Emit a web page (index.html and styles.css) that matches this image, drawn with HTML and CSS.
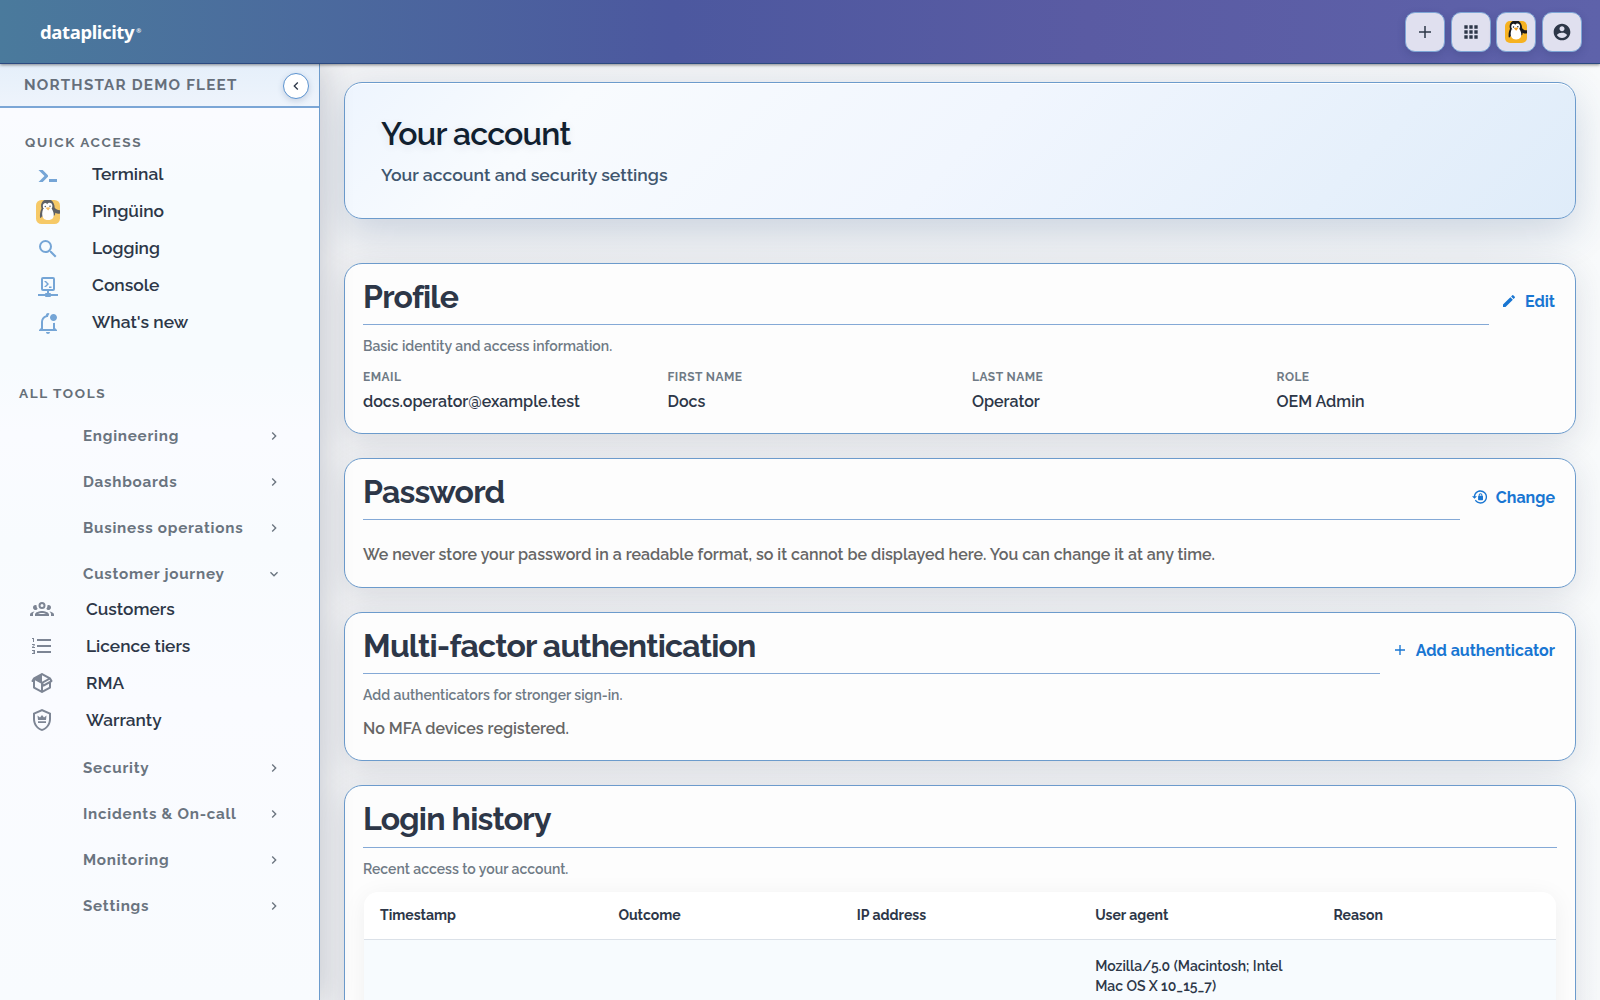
FILE: index.html
```
<!DOCTYPE html>
<html lang="en">
<head>
    <meta charset="UTF-8">
    <meta name="viewport" content="width=device-width, initial-scale=1.0">
    <title>Your account</title>
    <link rel="stylesheet" href="styles.css">
</head>
<body>
    <!-- Shared shapes -->
    <svg class="defs" aria-hidden="true">
        <symbol id="penguin" viewBox="0 0 24 24">
            <rect width="24" height="24" rx="5.5" fill="#f6b221"/>
            <path d="M7 1C5 3 4.600 6 5.500 8.500C4.300 11 3.700 14 4 17.500C4.300 18.600 5.300 17.500 5.800 16.500L18.500 15.500C19.300 14.500 19.300 13.500 19.200 12.800C21 13.800 23 14 24 13.400V10.200C22 10.300 20 9.500 18.700 7.800C18.600 4.500 17.500 2 15 0H8.500z" fill="#17181c"/>
            <path d="M7.200 9C6 12 5.600 15.500 7.300 18C8.700 20.600 15 21 17 18C18.600 15.500 17.500 11 15.500 8.500z" fill="#fff"/>
            <path d="M11.200 4.200C10 2.300 7.200 2.700 6.800 5.800C6.700 8.500 8.500 10.500 11.500 10.500C14.800 10.500 16.900 8 16.300 5C15.700 2.300 12.600 1.900 11.200 4.200z" fill="#fff"/>
            <circle cx="9.300" cy="6.500" r=".8" fill="#17181c"/>
            <circle cx="14" cy="6.200" r=".8" fill="#17181c"/>
            <path d="M9.600 8C11 7 13 7 14.400 7.800L12.200 10.600z" fill="#f59f1c"/>
        </symbol>
        <symbol id="chevron" viewBox="0 0 24 24">
            <path d="M10 6 8.590 7.410 13.170 12l-4.580 4.590L10 18l6-6z"/>
        </symbol>
    </svg>

    <header class="topbar">
        <a class="logo">dataplicity<sup>®</sup></a>
        <div class="topbar-actions">
            <button class="icon-btn"><svg viewBox="0 0 24 24"><path d="M20 13h-7v7h-2v-7H4v-2h7V4h2v7h7z"/></svg></button>
            <button class="icon-btn"><svg viewBox="0 0 24 24"><path d="M4 8h4V4H4v4zm6 12h4v-4h-4v4zm-6 0h4v-4H4v4zm0-6h4v-4H4v4zm6 0h4v-4h-4v4zm6-10v4h4V4h-4zm-6 4h4V4h-4v4zm6 6h4v-4h-4v4zm0 6h4v-4h-4v4z"/></svg></button>
            <button class="icon-btn"><svg class="big" viewBox="0 0 24 24"><use href="#penguin"/></svg></button>
            <button class="icon-btn"><svg viewBox="0 0 24 24"><path d="M12 2C6.480 2 2 6.480 2 12s4.480 10 10 10 10-4.480 10-10S17.520 2 12 2zm0 3c1.660 0 3 1.340 3 3s-1.340 3-3 3-3-1.340-3-3 1.340-3 3-3zm0 14.200c-2.500 0-4.710-1.280-6-3.220.03-1.990 4-3.080 6-3.080 1.990 0 5.970 1.090 6 3.080-1.290 1.940-3.500 3.220-6 3.220z"/></svg></button>
        </div>
    </header>

    <div class="layout">
        <aside class="sidebar">
            <div class="org">
                <span>NORTHSTAR DEMO FLEET</span>
                <button class="collapse"><svg viewBox="0 0 24 24"><path d="M15.410 7.410 14 6l-6 6 6 6 1.410-1.410L10.830 12z"/></svg></button>
            </div>

            <h4 class="section-label">QUICK ACCESS</h4>
            <ul class="quick">
                <li><svg viewBox="0 0 24 24"><path d="M13 19V16H21V19H13M8.500 13L2.470 7H6.710L11.670 11.950C12.250 12.540 12.250 13.500 11.670 14.070L6.740 19H2.500L8.500 13Z"/></svg>Terminal</li>
                <li><svg viewBox="0 0 24 24"><use href="#penguin"/></svg>Pingüino</li>
                <li><svg viewBox="0 0 24 24"><path d="M15.500 14h-.79l-.28-.27A6.471 6.471 0 0 0 16 9.500 6.500 6.500 0 1 0 9.500 16c1.610 0 3.090-.59 4.230-1.570l.27.28v.79l5 4.990L20.490 19l-4.990-5zm-6 0C7.010 14 5 11.990 5 9.500S7.010 5 9.500 5 14 7.010 14 9.500 11.990 14 9.500 14z"/></svg>Logging</li>
                <li><svg viewBox="0 0 24 24"><path d="M15 20A1 1 0 0 0 14 19H13V17H17A2 2 0 0 0 19 15V5A2 2 0 0 0 17 3H7A2 2 0 0 0 5 5V15A2 2 0 0 0 7 17H11V19H10A1 1 0 0 0 9 20H2V22H9A1 1 0 0 0 10 23H14A1 1 0 0 0 15 22H22V20H15M7 15V5H17V15H7M8 7H10L13 10L10 13H8L11 10zM13 12.500H15.500V14H13z"/></svg>Console</li>
                <li><svg viewBox="0 0 24 24"><path d="M19 17V11.800C18.500 11.900 18 12 17.500 12H17V18H7V11C7 8.200 9.200 6 12 6C12.100 4.700 12.700 3.600 13.500 2.700C13.200 2.300 12.600 2 12 2C10.900 2 10 2.900 10 4V4.300C7 5.200 5 7.900 5 11V17L3 19V20H21V19L19 17M10 21C10 22.100 10.900 23 12 23S14 22.100 14 21H10M21 6.500C21 8.400 19.400 10 17.500 10S14 8.400 14 6.500 15.600 3 17.500 3 21 4.600 21 6.500"/></svg>What's new</li>
            </ul>

            <h4 class="section-label tools-label">ALL TOOLS</h4>
            <nav class="tools">
                <div class="group">Engineering<svg><use href="#chevron"/></svg></div>
                <div class="group">Dashboards<svg><use href="#chevron"/></svg></div>
                <div class="group">Business operations<svg><use href="#chevron"/></svg></div>
                <div class="group open">Customer journey<svg><use href="#chevron"/></svg></div>
                <ul class="children">
                    <li><svg viewBox="0 0 24 24"><path d="M12,5A3.500,3.500 0 0,0 8.500,8.500A3.500,3.500 0 0,0 12,12A3.500,3.500 0 0,0 15.500,8.500A3.500,3.500 0 0,0 12,5M12,7A1.500,1.500 0 0,1 13.500,8.500A1.500,1.500 0 0,1 12,10A1.500,1.500 0 0,1 10.500,8.500A1.500,1.500 0 0,1 12,7M5.500,8A2.500,2.500 0 0,0 3,10.500C3,11.440 3.530,12.250 4.290,12.680C4.650,12.880 5.060,13 5.500,13C5.940,13 6.350,12.880 6.710,12.680C7.080,12.470 7.390,12.170 7.620,11.810C6.890,10.860 6.500,9.700 6.500,8.500C6.500,8.410 6.500,8.310 6.500,8.220C6.200,8.080 5.860,8 5.500,8M18.500,8C18.140,8 17.800,8.080 17.500,8.220C17.500,8.310 17.500,8.410 17.500,8.500C17.500,9.700 17.110,10.860 16.380,11.810C16.500,12 16.630,12.150 16.780,12.300C16.940,12.450 17.100,12.580 17.290,12.680C17.650,12.880 18.060,13 18.500,13C18.940,13 19.350,12.880 19.710,12.680C20.470,12.250 21,11.440 21,10.500A2.500,2.500 0 0,0 18.500,8M12,14C9.660,14 5,15.170 5,17.500V19H19V17.500C19,15.170 14.340,14 12,14M4.710,14.550C2.780,14.780 0,15.760 0,17.500V19H3V17.070C3,16.060 3.690,15.220 4.710,14.550M19.290,14.550C20.310,15.220 21,16.060 21,17.070V19H24V17.500C24,15.760 21.220,14.780 19.290,14.550M12,16C13.530,16 15.240,16.500 16.230,17H7.770C8.760,16.500 10.470,16 12,16Z"/></svg>Customers</li>
                    <li><svg viewBox="0 0 24 24"><path d="M7,13V11H21V13H7M7,19V17H21V19H7M7,7V5H21V7H7M3,8V5H2V4H4V8H3M2,17V16H5V20H2V19H4V18.500H3V17.500H4V17H2M4.250,10A0.750,0.750 0 0,1 5,10.750C5,10.950 4.920,11.140 4.790,11.270L3.120,13H5V14H2V13.080L4,11H2V10H4.250Z"/></svg>Licence tiers</li>
                    <li><svg viewBox="0 0 24 24"><path d="M2,10.960C1.500,10.680 1.350,10.070 1.630,9.590L3.130,7C3.240,6.800 3.410,6.660 3.600,6.580L11.430,2.180C11.590,2.060 11.790,2 12,2C12.210,2 12.410,2.060 12.570,2.180L20.470,6.620C20.660,6.720 20.820,6.880 20.910,7.080L22.360,9.600C22.640,10.080 22.470,10.690 22,10.960L21,11.540V16.500C21,16.880 20.790,17.210 20.470,17.380L12.570,21.820C12.410,21.940 12.210,22 12,22C11.790,22 11.590,21.940 11.430,21.820L3.530,17.380C3.210,17.210 3,16.880 3,16.500V10.960C2.700,11.130 2.320,11.140 2,10.960M12,4.150L12,10.850L17.960,7.500L12,4.150M5,15.910L11,19.290V12.580L5,9.210V15.910M19,15.910V12.690L14,15.590C13.670,15.770 13.300,15.760 13,15.600V19.290L19,15.910M13.850,13.360L20.130,9.730L19.550,8.720L13.270,12.350L13.850,13.360Z"/></svg>RMA</li>
                    <li><svg viewBox="0 0 24 24"><path d="M21,11C21,16.550 17.160,21.740 12,23C6.840,21.740 3,16.550 3,11V5L12,1L21,5V11M12,21C15.750,20 19,15.540 19,11.220V6.300L12,3.180L5,6.300V11.220C5,15.540 8.250,20 12,21M16.500,7.500L14,9.500L12,7L10,9.500L7.500,7.500L8,12H16L16.500,7.500M16,13.200H8V15H16V13.200Z"/></svg>Warranty</li>
                </ul>
                <div class="group">Security<svg><use href="#chevron"/></svg></div>
                <div class="group">Incidents &amp; On-call<svg><use href="#chevron"/></svg></div>
                <div class="group">Monitoring<svg><use href="#chevron"/></svg></div>
                <div class="group">Settings<svg><use href="#chevron"/></svg></div>
            </nav>
        </aside>

        <main class="content">
            <section class="hero">
                <h1>Your account</h1>
                <p>Your account and security settings</p>
            </section>

            <section class="card profile">
                <div class="card-head">
                    <h2>Profile</h2>
                    <a class="action"><svg viewBox="0 0 24 24"><path d="M3 17.250V21h3.750L17.810 9.940l-3.750-3.750L3 17.250zM20.710 7.040c.39-.39.39-1.020 0-1.410l-2.340-2.340a.996.996 0 0 0-1.410 0l-1.830 1.830 3.750 3.750 1.830-1.830z"/></svg>Edit</a>
                </div>
                <p class="hint">Basic identity and access information.</p>
                <dl class="fields">
                    <div><dt>EMAIL</dt><dd>docs.operator@example.test</dd></div>
                    <div><dt>FIRST NAME</dt><dd>Docs</dd></div>
                    <div><dt>LAST NAME</dt><dd>Operator</dd></div>
                    <div><dt>ROLE</dt><dd>OEM Admin</dd></div>
                </dl>
            </section>

            <section class="card password">
                <div class="card-head">
                    <h2>Password</h2>
                    <a class="action"><svg viewBox="0 0 24 24"><path d="M12.630,2C18.160,2 22.640,6.500 22.640,12C22.640,17.500 18.160,22 12.630,22C9.120,22 6.050,20.180 4.260,17.430L5.840,16.180C7.250,18.470 9.760,20 12.640,20A8,8 0 0,0 20.640,12A8,8 0 0,0 12.640,4C8.560,4 5.200,7.060 4.710,11H7.470L3.730,14.730L0,11H2.690C3.190,5.950 7.450,2 12.630,2M15.590,10.240C16.090,10.250 16.500,10.650 16.500,11.160V15.770C16.500,16.270 16.090,16.690 15.580,16.690H10.050C9.540,16.690 9.130,16.270 9.130,15.770V11.160C9.130,10.650 9.540,10.250 10.040,10.240V9.230C10.040,7.700 11.290,6.460 12.810,6.460C14.340,6.460 15.590,7.700 15.590,9.230V10.240M12.810,7.860C12.060,7.860 11.440,8.470 11.440,9.230V10.240H14.190V9.230C14.190,8.470 13.570,7.860 12.810,7.860Z"/></svg>Change</a>
                </div>
                <p class="text">We never store your password in a readable format, so it cannot be displayed here. You can change it at any time.</p>
            </section>

            <section class="card mfa">
                <div class="card-head">
                    <h2>Multi-factor authentication</h2>
                    <a class="action"><svg viewBox="0 0 24 24"><path d="M19.500 13h-6.500v6.500h-2v-6.500H4.500v-2h6.500V4.500h2v6.500h6.500z"/></svg>Add authenticator</a>
                </div>
                <p class="hint">Add authenticators for stronger sign-in.</p>
                <p class="text">No MFA devices registered.</p>
            </section>

            <section class="card history">
                <div class="card-head">
                    <h2>Login history</h2>
                </div>
                <p class="hint">Recent access to your account.</p>
                <table>
                    <thead>
                        <tr><th>Timestamp</th><th>Outcome</th><th>IP address</th><th>User agent</th><th>Reason</th></tr>
                    </thead>
                    <tbody>
                        <tr><td></td><td></td><td></td><td>Mozilla/5.0 (Macintosh; Intel Mac OS X 10_15_7)</td><td></td></tr>
                    </tbody>
                </table>
            </section>
        </main>
    </div>
</body>
</html>
```
FILE: styles.css
```
:root {
    --line: #6c9bcc;
    --link: #1976d2;
    --text: #2d3748;
    --muted: #6f7a85;
}

* {
    box-sizing: border-box;
}

body {
    margin: 0;
    height: 100vh;
    overflow: hidden;
    display: flex;
    flex-direction: column;
    font-family: Raleway, Lato, sans-serif;
    font-weight: 600;
    color: var(--text);
    background: #f7f9fb;
}

h1, h2, h4, p, ul, dl, dd {
    margin: 0;
    padding: 0;
}

ul {
    list-style: none;
}

button {
    padding: 0;
    display: flex;
    align-items: center;
    justify-content: center;
}

svg {
    fill: currentColor;
    flex-shrink: 0;
}

.defs {
    display: none;
}

/* Top bar */
.topbar {
    position: relative;
    z-index: 2;
    height: 64px;
    flex-shrink: 0;
    display: flex;
    align-items: center;
    justify-content: space-between;
    padding: 0 18px 0 40px;
    background: linear-gradient(90deg, #4a7a9c 0%, #4c589f 42%, #5a5ba3 68%, #5e62aa 100%);
    border-bottom: 1px solid #2c4a80;
    box-shadow: 0 1px 3px rgba(0, 0, 0, 0.45);
}

.logo {
    font-family: "Noto Sans", sans-serif;
    font-weight: 700;
    font-size: 18.5px;
    letter-spacing: -0.37px;
    color: #fff;
}

.logo sup {
    font-size: 6px;
    margin-left: 2px;
    vertical-align: 6px;
    line-height: 0;
}

.topbar-actions {
    display: flex;
    gap: 5.6px;
}

.icon-btn {
    width: 40px;
    height: 40px;
    border: 1px solid #7ea6d6;
    border-radius: 10px;
    background: #e0e0ef;
    color: #2d3748;
    box-shadow: 0 3px 8px rgba(30, 40, 90, 0.2);
}

.icon-btn svg {
    width: 20px;
    height: 20px;
}

.icon-btn:first-child svg {
    width: 18px;
    height: 18px;
}

.icon-btn svg.big {
    width: 22px;
    height: 22px;
}

.layout {
    flex: 1;
    min-height: 0;
    display: flex;
}

/* Sidebar */
.sidebar {
    position: relative;
    z-index: 1;
    width: 320px;
    flex-shrink: 0;
    border-right: 1px solid var(--line);
    background: linear-gradient(180deg, #fafbff 50px, #f7fbfe 120px, #f7fbfe 300px, #fafbff 370px, #f8fbfe 480px, #fafbff 640px, #f8fbfe 100%);
    box-shadow: 4px 0 28px rgba(30, 45, 70, 0.19);
}

.org {
    height: 44px;
    display: flex;
    align-items: center;
    justify-content: space-between;
    padding: 1px 10px 0 24px;
    border-bottom: 2px solid #7ba6d6;
    background: linear-gradient(180deg, #e5effa, #eef4fc);
    font-weight: 700;
    font-size: 15.2px;
    line-height: 38px;
    letter-spacing: 1.23px;
    color: #666f7b;
}

.org span {
    margin-top: -1px;
}

.collapse {
    width: 26px;
    height: 26px;
    border: 1px solid #5b93d0;
    border-radius: 50%;
    background: #fff;
    color: var(--text);
    box-shadow: 0 2px 6px rgba(40, 70, 120, 0.2);
}

.collapse svg {
    width: 16px;
    height: 16px;
}

.section-label {
    margin: 24px 0 3px 25px;
    font-weight: 700;
    font-size: 13.6px;
    line-height: 20px;
    letter-spacing: 1.63px;
    color: #666f78;
}

.quick li,
.children li {
    display: flex;
    align-items: center;
    height: 37px;
    font-size: 17.4px;
}

.quick svg,
.children svg {
    width: 24px;
    height: 24px;
    margin-right: 32px;
}

.quick li {
    padding-left: 36px;
}

.quick svg {
    position: relative;
    top: 1px;
    color: #75a5d6;
}

.quick li:nth-child(2) svg {
    opacity: 0.68;
}

.tools-label {
    margin: 43px 0 15px 19px;
}

.tools {
    display: flex;
    flex-direction: column;
}

.group {
    display: flex;
    align-items: center;
    justify-content: space-between;
    height: 36px;
    margin-bottom: 10px;
    padding: 0 37px 0 83px;
    font-weight: 700;
    font-size: 15.2px;
    letter-spacing: 0.76px;
    color: #6a747f;
}

.group svg {
    width: 16px;
    height: 16px;
}

.group.open {
    margin-bottom: -2px;
}

.group.open svg {
    transform: rotate(90deg);
}

.children {
    margin-bottom: 12px;
}

.children li {
    padding-left: 30px;
    font-size: 17.3px;
}

.children svg {
    color: #7d8594;
}

/* Content */
.content {
    flex: 1;
    min-width: 0;
    padding: 18px 24px 0;
    background: linear-gradient(90deg, #f1f2f4, #f3f5f7 90%, #f8fafb);
}

.hero,
.card {
    border: 1px solid var(--line);
    border-radius: 18px;
}

.hero {
    height: 137px;
    margin-bottom: 44px;
    padding: 31px 36px;
    background: linear-gradient(135deg, #eef5fe 0%, #f8fbfe 18%, #f1f6fe 50%, #e6f0fb 80%, #dfecf9 100%);
    box-shadow: 0 14px 40px rgba(50, 85, 135, 0.2), inset 0 1px 0 #fff;
}

.hero h1 {
    font-weight: 600;
    font-size: 32px;
    line-height: 40px;
    letter-spacing: -0.8px;
    color: #10202f;
    text-shadow: 0 2px 8px rgba(40, 60, 90, 0.1);
}

.hero p {
    margin-top: 9px;
    font-size: 17.6px;
    line-height: 24px;
    color: #40566e;
}

.card {
    margin-bottom: 24px;
    padding: 13px 18px 0;
    background: #fdfdfd;
    box-shadow: 0 8px 32px rgba(35, 45, 75, 0.12);
}

.profile {
    height: 171px;
}

.password {
    height: 130px;
}

.mfa {
    height: 149px;
}

.card-head {
    display: flex;
    align-items: center;
    gap: 12px;
    height: 48px;
}

.card-head h2 {
    flex: 1;
    height: 48px;
    font-weight: 700;
    font-size: 32px;
    line-height: 40px;
    letter-spacing: -0.8px;
    border-bottom: 1px solid #84a9d6;
}

.action {
    display: flex;
    align-items: center;
    gap: 8px;
    padding-right: 2px;
    font-weight: 700;
    font-size: 16px;
    color: var(--link);
}

.action svg {
    width: 16px;
    height: 16px;
}

.password .action {
    padding-top: 2px;
}

.hint {
    margin-top: 11px;
    font-size: 14px;
    line-height: 20px;
    color: var(--muted);
}

.fields {
    display: grid;
    grid-template-columns: repeat(4, 1fr);
    gap: 24px;
    margin-top: 12px;
}

.fields dt {
    font-weight: 700;
    font-size: 12px;
    line-height: 18px;
    letter-spacing: 0.45px;
    color: var(--muted);
}

.fields dd {
    margin-top: 4px;
    font-size: 16px;
    line-height: 24px;
}

.text {
    margin-top: 12px;
    font-size: 16px;
    line-height: 24px;
    color: #666;
}

.password .text {
    margin-top: 23px;
}

/* Login history */
.history {
    height: 420px;
}

.history .card-head,
.history .card-head h2 {
    height: 49px;
}

.history table {
    width: 1192px;
    margin: 13px 1px 0;
    table-layout: fixed;
    border-collapse: separate;
    border-spacing: 0;
    border-radius: 14px;
    overflow: hidden;
    background: #fff;
    box-shadow: 0 4px 24px rgba(0, 0, 0, 0.06);
    font-size: 14px;
    line-height: 20px;
}

.history th {
    height: 48px;
    padding: 0 16px 2px;
    text-align: left;
    font-weight: 700;
    border-bottom: 1px solid #dbe1e8;
}

.history td {
    height: 120px;
    padding: 16px;
    vertical-align: top;
    background: #f7fbfe;
}
```
